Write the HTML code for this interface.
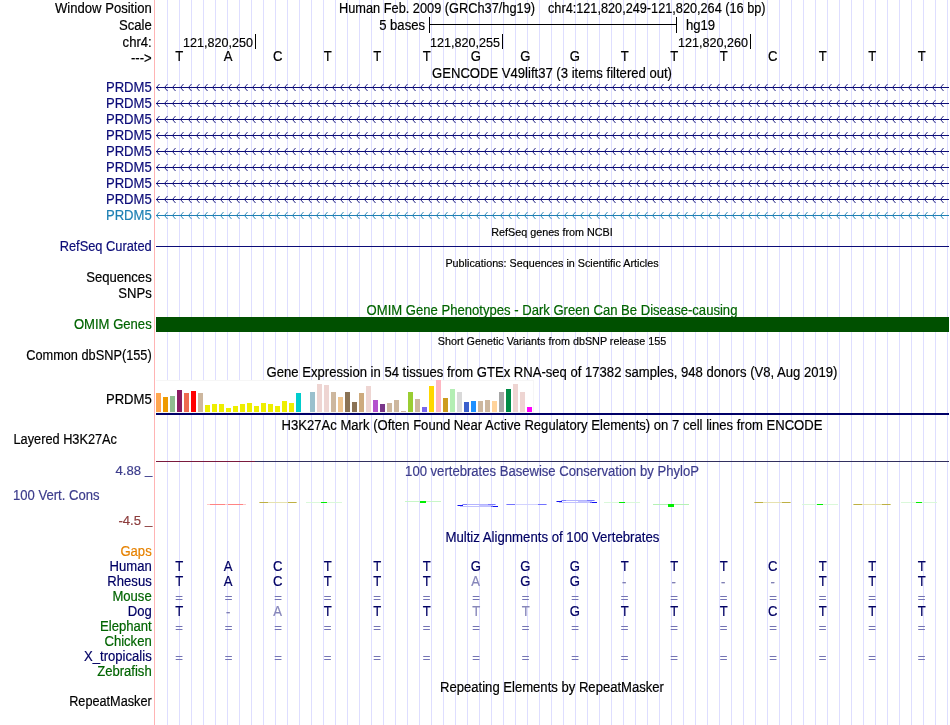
<!DOCTYPE html>
<html lang="en"><head><meta charset="utf-8"><title>UCSC Genome Browser - chr4:121,820,249-121,820,264</title>
<style>
html,body{margin:0;padding:0;background:#fff;}
svg{display:block;will-change:transform;font-family:"Liberation Sans", "DejaVu Sans", sans-serif;}
rect{shape-rendering:crispEdges;}
text{stroke-width:0.18px;}
</style></head><body>
<svg width="950" height="725" viewBox="0 0 950 725">
<rect x="0" y="0" width="950" height="725" fill="#fff"/>
<path d="M167.5 0V725M179.5 0V725M191.5 0V725M203.5 0V725M215.5 0V725M227.5 0V725M239.5 0V725M251.5 0V725M263.5 0V725M275.5 0V725M287.5 0V725M299.5 0V725M311.5 0V725M323.5 0V725M335.5 0V725M347.5 0V725M359.5 0V725M371.5 0V725M383.5 0V725M395.5 0V725M407.5 0V725M419.5 0V725M431.5 0V725M443.5 0V725M455.5 0V725M467.5 0V725M479.5 0V725M491.5 0V725M503.5 0V725M515.5 0V725M527.5 0V725M539.5 0V725M551.5 0V725M563.5 0V725M575.5 0V725M587.5 0V725M599.5 0V725M611.5 0V725M623.5 0V725M635.5 0V725M647.5 0V725M659.5 0V725M671.5 0V725M683.5 0V725M695.5 0V725M707.5 0V725M719.5 0V725M731.5 0V725M743.5 0V725M755.5 0V725M767.5 0V725M779.5 0V725M791.5 0V725M803.5 0V725M815.5 0V725M827.5 0V725M839.5 0V725M851.5 0V725M863.5 0V725M875.5 0V725M887.5 0V725M899.5 0V725M911.5 0V725M923.5 0V725M935.5 0V725M947.5 0V725" stroke="#dedeff" stroke-width="1" fill="none"/>
<rect x="154" y="0" width="1" height="725" fill="#ffb4b4"/>
<text transform="matrix(1 0 0 1.07 151.7 13)" text-anchor="end" fill="#000" stroke="#000" font-size="13.1">Window Position</text>
<text transform="matrix(1 0 0 1.07 339 13)" text-anchor="start" fill="#000" stroke="#000" font-size="13.1" textLength="196" lengthAdjust="spacingAndGlyphs">Human Feb. 2009 (GRCh37/hg19)</text>
<text transform="matrix(1 0 0 1.07 548 13)" text-anchor="start" fill="#000" stroke="#000" font-size="13.1" textLength="217.5" lengthAdjust="spacingAndGlyphs">chr4:121,820,249-121,820,264 (16 bp)</text>
<text transform="matrix(1 0 0 1.07 151.7 30)" text-anchor="end" fill="#000" stroke="#000" font-size="13.1">Scale</text>
<text transform="matrix(1 0 0 1.07 425 30)" text-anchor="end" fill="#000" stroke="#000" font-size="13.1">5 bases</text>
<rect x="429" y="24" width="248" height="1" fill="#000"/>
<rect x="429" y="17" width="1" height="16" fill="#000"/>
<rect x="676" y="17" width="1" height="16" fill="#000"/>
<text transform="matrix(1 0 0 1.07 686 30)" text-anchor="start" fill="#000" stroke="#000" font-size="13.1">hg19</text>
<text transform="matrix(1 0 0 1.07 151.7 47)" text-anchor="end" fill="#000" stroke="#000" font-size="13.1">chr4:</text>
<rect x="255" y="34" width="1" height="15" fill="#000"/>
<text transform="matrix(1 0 0 1.0 253 47)" text-anchor="end" fill="#000" stroke="#000" font-size="13.1" textLength="70" lengthAdjust="spacingAndGlyphs">121,820,250</text>
<rect x="502" y="34" width="1" height="15" fill="#000"/>
<text transform="matrix(1 0 0 1.0 500 47)" text-anchor="end" fill="#000" stroke="#000" font-size="13.1" textLength="70" lengthAdjust="spacingAndGlyphs">121,820,255</text>
<rect x="750" y="34" width="1" height="15" fill="#000"/>
<text transform="matrix(1 0 0 1.0 748 47)" text-anchor="end" fill="#000" stroke="#000" font-size="13.1" textLength="70" lengthAdjust="spacingAndGlyphs">121,820,260</text>
<text transform="matrix(1 0 0 1.07 151.7 63)" text-anchor="end" fill="#000" stroke="#000" font-size="13.1">---&gt;</text>
<text transform="matrix(1 0 0 1.07 179.3 61)" text-anchor="middle" fill="#000" stroke="#000" font-size="13.1">T</text>
<text transform="matrix(1 0 0 1.07 228.0 61)" text-anchor="middle" fill="#000" stroke="#000" font-size="13.1">A</text>
<text transform="matrix(1 0 0 1.07 277.7 61)" text-anchor="middle" fill="#000" stroke="#000" font-size="13.1">C</text>
<text transform="matrix(1 0 0 1.07 327.8 61)" text-anchor="middle" fill="#000" stroke="#000" font-size="13.1">T</text>
<text transform="matrix(1 0 0 1.07 377.3 61)" text-anchor="middle" fill="#000" stroke="#000" font-size="13.1">T</text>
<text transform="matrix(1 0 0 1.07 426.8 61)" text-anchor="middle" fill="#000" stroke="#000" font-size="13.1">T</text>
<text transform="matrix(1 0 0 1.07 475.9 61)" text-anchor="middle" fill="#000" stroke="#000" font-size="13.1">G</text>
<text transform="matrix(1 0 0 1.07 525.4 61)" text-anchor="middle" fill="#000" stroke="#000" font-size="13.1">G</text>
<text transform="matrix(1 0 0 1.07 574.9 61)" text-anchor="middle" fill="#000" stroke="#000" font-size="13.1">G</text>
<text transform="matrix(1 0 0 1.07 624.8 61)" text-anchor="middle" fill="#000" stroke="#000" font-size="13.1">T</text>
<text transform="matrix(1 0 0 1.07 674.3 61)" text-anchor="middle" fill="#000" stroke="#000" font-size="13.1">T</text>
<text transform="matrix(1 0 0 1.07 723.8 61)" text-anchor="middle" fill="#000" stroke="#000" font-size="13.1">T</text>
<text transform="matrix(1 0 0 1.07 772.7 61)" text-anchor="middle" fill="#000" stroke="#000" font-size="13.1">C</text>
<text transform="matrix(1 0 0 1.07 822.8 61)" text-anchor="middle" fill="#000" stroke="#000" font-size="13.1">T</text>
<text transform="matrix(1 0 0 1.07 872.3 61)" text-anchor="middle" fill="#000" stroke="#000" font-size="13.1">T</text>
<text transform="matrix(1 0 0 1.07 921.8 61)" text-anchor="middle" fill="#000" stroke="#000" font-size="13.1">T</text>
<text transform="matrix(1 0 0 1.07 552 78)" text-anchor="middle" fill="#000" stroke="#000" font-size="13.1">GENCODE V49lift37 (3 items filtered out)</text>
<defs><path id="bb" d="M3.5 -3.5L0.5 0L3.5 3.5" fill="none" stroke-width="1"/></defs>
<text transform="matrix(1 0 0 1.07 151.7 92)" text-anchor="end" fill="#0c0c78" stroke="#0c0c78" font-size="13.1">PRDM5</text>
<rect x="156" y="87" width="793" height="1" fill="#0c0c78"/>
<path d="M159.5 84L156.5 87.5L159.5 91M167.5 84L164.5 87.5L167.5 91M175.5 84L172.5 87.5L175.5 91M183.5 84L180.5 87.5L183.5 91M191.5 84L188.5 87.5L191.5 91M199.5 84L196.5 87.5L199.5 91M207.5 84L204.5 87.5L207.5 91M215.5 84L212.5 87.5L215.5 91M223.5 84L220.5 87.5L223.5 91M231.5 84L228.5 87.5L231.5 91M239.5 84L236.5 87.5L239.5 91M247.5 84L244.5 87.5L247.5 91M255.5 84L252.5 87.5L255.5 91M263.5 84L260.5 87.5L263.5 91M271.5 84L268.5 87.5L271.5 91M279.5 84L276.5 87.5L279.5 91M287.5 84L284.5 87.5L287.5 91M295.5 84L292.5 87.5L295.5 91M303.5 84L300.5 87.5L303.5 91M311.5 84L308.5 87.5L311.5 91M319.5 84L316.5 87.5L319.5 91M327.5 84L324.5 87.5L327.5 91M335.5 84L332.5 87.5L335.5 91M343.5 84L340.5 87.5L343.5 91M351.5 84L348.5 87.5L351.5 91M359.5 84L356.5 87.5L359.5 91M367.5 84L364.5 87.5L367.5 91M375.5 84L372.5 87.5L375.5 91M383.5 84L380.5 87.5L383.5 91M391.5 84L388.5 87.5L391.5 91M399.5 84L396.5 87.5L399.5 91M407.5 84L404.5 87.5L407.5 91M415.5 84L412.5 87.5L415.5 91M423.5 84L420.5 87.5L423.5 91M431.5 84L428.5 87.5L431.5 91M439.5 84L436.5 87.5L439.5 91M447.5 84L444.5 87.5L447.5 91M455.5 84L452.5 87.5L455.5 91M463.5 84L460.5 87.5L463.5 91M471.5 84L468.5 87.5L471.5 91M479.5 84L476.5 87.5L479.5 91M487.5 84L484.5 87.5L487.5 91M495.5 84L492.5 87.5L495.5 91M503.5 84L500.5 87.5L503.5 91M511.5 84L508.5 87.5L511.5 91M519.5 84L516.5 87.5L519.5 91M527.5 84L524.5 87.5L527.5 91M535.5 84L532.5 87.5L535.5 91M543.5 84L540.5 87.5L543.5 91M551.5 84L548.5 87.5L551.5 91M559.5 84L556.5 87.5L559.5 91M567.5 84L564.5 87.5L567.5 91M575.5 84L572.5 87.5L575.5 91M583.5 84L580.5 87.5L583.5 91M591.5 84L588.5 87.5L591.5 91M599.5 84L596.5 87.5L599.5 91M607.5 84L604.5 87.5L607.5 91M615.5 84L612.5 87.5L615.5 91M623.5 84L620.5 87.5L623.5 91M631.5 84L628.5 87.5L631.5 91M639.5 84L636.5 87.5L639.5 91M647.5 84L644.5 87.5L647.5 91M655.5 84L652.5 87.5L655.5 91M663.5 84L660.5 87.5L663.5 91M671.5 84L668.5 87.5L671.5 91M679.5 84L676.5 87.5L679.5 91M687.5 84L684.5 87.5L687.5 91M695.5 84L692.5 87.5L695.5 91M703.5 84L700.5 87.5L703.5 91M711.5 84L708.5 87.5L711.5 91M719.5 84L716.5 87.5L719.5 91M727.5 84L724.5 87.5L727.5 91M735.5 84L732.5 87.5L735.5 91M743.5 84L740.5 87.5L743.5 91M751.5 84L748.5 87.5L751.5 91M759.5 84L756.5 87.5L759.5 91M767.5 84L764.5 87.5L767.5 91M775.5 84L772.5 87.5L775.5 91M783.5 84L780.5 87.5L783.5 91M791.5 84L788.5 87.5L791.5 91M799.5 84L796.5 87.5L799.5 91M807.5 84L804.5 87.5L807.5 91M815.5 84L812.5 87.5L815.5 91M823.5 84L820.5 87.5L823.5 91M831.5 84L828.5 87.5L831.5 91M839.5 84L836.5 87.5L839.5 91M847.5 84L844.5 87.5L847.5 91M855.5 84L852.5 87.5L855.5 91M863.5 84L860.5 87.5L863.5 91M871.5 84L868.5 87.5L871.5 91M879.5 84L876.5 87.5L879.5 91M887.5 84L884.5 87.5L887.5 91M895.5 84L892.5 87.5L895.5 91M903.5 84L900.5 87.5L903.5 91M911.5 84L908.5 87.5L911.5 91M919.5 84L916.5 87.5L919.5 91M927.5 84L924.5 87.5L927.5 91M935.5 84L932.5 87.5L935.5 91M943.5 84L940.5 87.5L943.5 91" stroke="#0c0c78" stroke-width="0.9" fill="none"/>
<text transform="matrix(1 0 0 1.07 151.7 108)" text-anchor="end" fill="#0c0c78" stroke="#0c0c78" font-size="13.1">PRDM5</text>
<rect x="156" y="103" width="793" height="1" fill="#0c0c78"/>
<path d="M159.5 100L156.5 103.5L159.5 107M167.5 100L164.5 103.5L167.5 107M175.5 100L172.5 103.5L175.5 107M183.5 100L180.5 103.5L183.5 107M191.5 100L188.5 103.5L191.5 107M199.5 100L196.5 103.5L199.5 107M207.5 100L204.5 103.5L207.5 107M215.5 100L212.5 103.5L215.5 107M223.5 100L220.5 103.5L223.5 107M231.5 100L228.5 103.5L231.5 107M239.5 100L236.5 103.5L239.5 107M247.5 100L244.5 103.5L247.5 107M255.5 100L252.5 103.5L255.5 107M263.5 100L260.5 103.5L263.5 107M271.5 100L268.5 103.5L271.5 107M279.5 100L276.5 103.5L279.5 107M287.5 100L284.5 103.5L287.5 107M295.5 100L292.5 103.5L295.5 107M303.5 100L300.5 103.5L303.5 107M311.5 100L308.5 103.5L311.5 107M319.5 100L316.5 103.5L319.5 107M327.5 100L324.5 103.5L327.5 107M335.5 100L332.5 103.5L335.5 107M343.5 100L340.5 103.5L343.5 107M351.5 100L348.5 103.5L351.5 107M359.5 100L356.5 103.5L359.5 107M367.5 100L364.5 103.5L367.5 107M375.5 100L372.5 103.5L375.5 107M383.5 100L380.5 103.5L383.5 107M391.5 100L388.5 103.5L391.5 107M399.5 100L396.5 103.5L399.5 107M407.5 100L404.5 103.5L407.5 107M415.5 100L412.5 103.5L415.5 107M423.5 100L420.5 103.5L423.5 107M431.5 100L428.5 103.5L431.5 107M439.5 100L436.5 103.5L439.5 107M447.5 100L444.5 103.5L447.5 107M455.5 100L452.5 103.5L455.5 107M463.5 100L460.5 103.5L463.5 107M471.5 100L468.5 103.5L471.5 107M479.5 100L476.5 103.5L479.5 107M487.5 100L484.5 103.5L487.5 107M495.5 100L492.5 103.5L495.5 107M503.5 100L500.5 103.5L503.5 107M511.5 100L508.5 103.5L511.5 107M519.5 100L516.5 103.5L519.5 107M527.5 100L524.5 103.5L527.5 107M535.5 100L532.5 103.5L535.5 107M543.5 100L540.5 103.5L543.5 107M551.5 100L548.5 103.5L551.5 107M559.5 100L556.5 103.5L559.5 107M567.5 100L564.5 103.5L567.5 107M575.5 100L572.5 103.5L575.5 107M583.5 100L580.5 103.5L583.5 107M591.5 100L588.5 103.5L591.5 107M599.5 100L596.5 103.5L599.5 107M607.5 100L604.5 103.5L607.5 107M615.5 100L612.5 103.5L615.5 107M623.5 100L620.5 103.5L623.5 107M631.5 100L628.5 103.5L631.5 107M639.5 100L636.5 103.5L639.5 107M647.5 100L644.5 103.5L647.5 107M655.5 100L652.5 103.5L655.5 107M663.5 100L660.5 103.5L663.5 107M671.5 100L668.5 103.5L671.5 107M679.5 100L676.5 103.5L679.5 107M687.5 100L684.5 103.5L687.5 107M695.5 100L692.5 103.5L695.5 107M703.5 100L700.5 103.5L703.5 107M711.5 100L708.5 103.5L711.5 107M719.5 100L716.5 103.5L719.5 107M727.5 100L724.5 103.5L727.5 107M735.5 100L732.5 103.5L735.5 107M743.5 100L740.5 103.5L743.5 107M751.5 100L748.5 103.5L751.5 107M759.5 100L756.5 103.5L759.5 107M767.5 100L764.5 103.5L767.5 107M775.5 100L772.5 103.5L775.5 107M783.5 100L780.5 103.5L783.5 107M791.5 100L788.5 103.5L791.5 107M799.5 100L796.5 103.5L799.5 107M807.5 100L804.5 103.5L807.5 107M815.5 100L812.5 103.5L815.5 107M823.5 100L820.5 103.5L823.5 107M831.5 100L828.5 103.5L831.5 107M839.5 100L836.5 103.5L839.5 107M847.5 100L844.5 103.5L847.5 107M855.5 100L852.5 103.5L855.5 107M863.5 100L860.5 103.5L863.5 107M871.5 100L868.5 103.5L871.5 107M879.5 100L876.5 103.5L879.5 107M887.5 100L884.5 103.5L887.5 107M895.5 100L892.5 103.5L895.5 107M903.5 100L900.5 103.5L903.5 107M911.5 100L908.5 103.5L911.5 107M919.5 100L916.5 103.5L919.5 107M927.5 100L924.5 103.5L927.5 107M935.5 100L932.5 103.5L935.5 107M943.5 100L940.5 103.5L943.5 107" stroke="#0c0c78" stroke-width="0.9" fill="none"/>
<text transform="matrix(1 0 0 1.07 151.7 124)" text-anchor="end" fill="#0c0c78" stroke="#0c0c78" font-size="13.1">PRDM5</text>
<rect x="156" y="119" width="793" height="1" fill="#0c0c78"/>
<path d="M159.5 116L156.5 119.5L159.5 123M167.5 116L164.5 119.5L167.5 123M175.5 116L172.5 119.5L175.5 123M183.5 116L180.5 119.5L183.5 123M191.5 116L188.5 119.5L191.5 123M199.5 116L196.5 119.5L199.5 123M207.5 116L204.5 119.5L207.5 123M215.5 116L212.5 119.5L215.5 123M223.5 116L220.5 119.5L223.5 123M231.5 116L228.5 119.5L231.5 123M239.5 116L236.5 119.5L239.5 123M247.5 116L244.5 119.5L247.5 123M255.5 116L252.5 119.5L255.5 123M263.5 116L260.5 119.5L263.5 123M271.5 116L268.5 119.5L271.5 123M279.5 116L276.5 119.5L279.5 123M287.5 116L284.5 119.5L287.5 123M295.5 116L292.5 119.5L295.5 123M303.5 116L300.5 119.5L303.5 123M311.5 116L308.5 119.5L311.5 123M319.5 116L316.5 119.5L319.5 123M327.5 116L324.5 119.5L327.5 123M335.5 116L332.5 119.5L335.5 123M343.5 116L340.5 119.5L343.5 123M351.5 116L348.5 119.5L351.5 123M359.5 116L356.5 119.5L359.5 123M367.5 116L364.5 119.5L367.5 123M375.5 116L372.5 119.5L375.5 123M383.5 116L380.5 119.5L383.5 123M391.5 116L388.5 119.5L391.5 123M399.5 116L396.5 119.5L399.5 123M407.5 116L404.5 119.5L407.5 123M415.5 116L412.5 119.5L415.5 123M423.5 116L420.5 119.5L423.5 123M431.5 116L428.5 119.5L431.5 123M439.5 116L436.5 119.5L439.5 123M447.5 116L444.5 119.5L447.5 123M455.5 116L452.5 119.5L455.5 123M463.5 116L460.5 119.5L463.5 123M471.5 116L468.5 119.5L471.5 123M479.5 116L476.5 119.5L479.5 123M487.5 116L484.5 119.5L487.5 123M495.5 116L492.5 119.5L495.5 123M503.5 116L500.5 119.5L503.5 123M511.5 116L508.5 119.5L511.5 123M519.5 116L516.5 119.5L519.5 123M527.5 116L524.5 119.5L527.5 123M535.5 116L532.5 119.5L535.5 123M543.5 116L540.5 119.5L543.5 123M551.5 116L548.5 119.5L551.5 123M559.5 116L556.5 119.5L559.5 123M567.5 116L564.5 119.5L567.5 123M575.5 116L572.5 119.5L575.5 123M583.5 116L580.5 119.5L583.5 123M591.5 116L588.5 119.5L591.5 123M599.5 116L596.5 119.5L599.5 123M607.5 116L604.5 119.5L607.5 123M615.5 116L612.5 119.5L615.5 123M623.5 116L620.5 119.5L623.5 123M631.5 116L628.5 119.5L631.5 123M639.5 116L636.5 119.5L639.5 123M647.5 116L644.5 119.5L647.5 123M655.5 116L652.5 119.5L655.5 123M663.5 116L660.5 119.5L663.5 123M671.5 116L668.5 119.5L671.5 123M679.5 116L676.5 119.5L679.5 123M687.5 116L684.5 119.5L687.5 123M695.5 116L692.5 119.5L695.5 123M703.5 116L700.5 119.5L703.5 123M711.5 116L708.5 119.5L711.5 123M719.5 116L716.5 119.5L719.5 123M727.5 116L724.5 119.5L727.5 123M735.5 116L732.5 119.5L735.5 123M743.5 116L740.5 119.5L743.5 123M751.5 116L748.5 119.5L751.5 123M759.5 116L756.5 119.5L759.5 123M767.5 116L764.5 119.5L767.5 123M775.5 116L772.5 119.5L775.5 123M783.5 116L780.5 119.5L783.5 123M791.5 116L788.5 119.5L791.5 123M799.5 116L796.5 119.5L799.5 123M807.5 116L804.5 119.5L807.5 123M815.5 116L812.5 119.5L815.5 123M823.5 116L820.5 119.5L823.5 123M831.5 116L828.5 119.5L831.5 123M839.5 116L836.5 119.5L839.5 123M847.5 116L844.5 119.5L847.5 123M855.5 116L852.5 119.5L855.5 123M863.5 116L860.5 119.5L863.5 123M871.5 116L868.5 119.5L871.5 123M879.5 116L876.5 119.5L879.5 123M887.5 116L884.5 119.5L887.5 123M895.5 116L892.5 119.5L895.5 123M903.5 116L900.5 119.5L903.5 123M911.5 116L908.5 119.5L911.5 123M919.5 116L916.5 119.5L919.5 123M927.5 116L924.5 119.5L927.5 123M935.5 116L932.5 119.5L935.5 123M943.5 116L940.5 119.5L943.5 123" stroke="#0c0c78" stroke-width="0.9" fill="none"/>
<text transform="matrix(1 0 0 1.07 151.7 140)" text-anchor="end" fill="#0c0c78" stroke="#0c0c78" font-size="13.1">PRDM5</text>
<rect x="156" y="135" width="793" height="1" fill="#0c0c78"/>
<path d="M159.5 132L156.5 135.5L159.5 139M167.5 132L164.5 135.5L167.5 139M175.5 132L172.5 135.5L175.5 139M183.5 132L180.5 135.5L183.5 139M191.5 132L188.5 135.5L191.5 139M199.5 132L196.5 135.5L199.5 139M207.5 132L204.5 135.5L207.5 139M215.5 132L212.5 135.5L215.5 139M223.5 132L220.5 135.5L223.5 139M231.5 132L228.5 135.5L231.5 139M239.5 132L236.5 135.5L239.5 139M247.5 132L244.5 135.5L247.5 139M255.5 132L252.5 135.5L255.5 139M263.5 132L260.5 135.5L263.5 139M271.5 132L268.5 135.5L271.5 139M279.5 132L276.5 135.5L279.5 139M287.5 132L284.5 135.5L287.5 139M295.5 132L292.5 135.5L295.5 139M303.5 132L300.5 135.5L303.5 139M311.5 132L308.5 135.5L311.5 139M319.5 132L316.5 135.5L319.5 139M327.5 132L324.5 135.5L327.5 139M335.5 132L332.5 135.5L335.5 139M343.5 132L340.5 135.5L343.5 139M351.5 132L348.5 135.5L351.5 139M359.5 132L356.5 135.5L359.5 139M367.5 132L364.5 135.5L367.5 139M375.5 132L372.5 135.5L375.5 139M383.5 132L380.5 135.5L383.5 139M391.5 132L388.5 135.5L391.5 139M399.5 132L396.5 135.5L399.5 139M407.5 132L404.5 135.5L407.5 139M415.5 132L412.5 135.5L415.5 139M423.5 132L420.5 135.5L423.5 139M431.5 132L428.5 135.5L431.5 139M439.5 132L436.5 135.5L439.5 139M447.5 132L444.5 135.5L447.5 139M455.5 132L452.5 135.5L455.5 139M463.5 132L460.5 135.5L463.5 139M471.5 132L468.5 135.5L471.5 139M479.5 132L476.5 135.5L479.5 139M487.5 132L484.5 135.5L487.5 139M495.5 132L492.5 135.5L495.5 139M503.5 132L500.5 135.5L503.5 139M511.5 132L508.5 135.5L511.5 139M519.5 132L516.5 135.5L519.5 139M527.5 132L524.5 135.5L527.5 139M535.5 132L532.5 135.5L535.5 139M543.5 132L540.5 135.5L543.5 139M551.5 132L548.5 135.5L551.5 139M559.5 132L556.5 135.5L559.5 139M567.5 132L564.5 135.5L567.5 139M575.5 132L572.5 135.5L575.5 139M583.5 132L580.5 135.5L583.5 139M591.5 132L588.5 135.5L591.5 139M599.5 132L596.5 135.5L599.5 139M607.5 132L604.5 135.5L607.5 139M615.5 132L612.5 135.5L615.5 139M623.5 132L620.5 135.5L623.5 139M631.5 132L628.5 135.5L631.5 139M639.5 132L636.5 135.5L639.5 139M647.5 132L644.5 135.5L647.5 139M655.5 132L652.5 135.5L655.5 139M663.5 132L660.5 135.5L663.5 139M671.5 132L668.5 135.5L671.5 139M679.5 132L676.5 135.5L679.5 139M687.5 132L684.5 135.5L687.5 139M695.5 132L692.5 135.5L695.5 139M703.5 132L700.5 135.5L703.5 139M711.5 132L708.5 135.5L711.5 139M719.5 132L716.5 135.5L719.5 139M727.5 132L724.5 135.5L727.5 139M735.5 132L732.5 135.5L735.5 139M743.5 132L740.5 135.5L743.5 139M751.5 132L748.5 135.5L751.5 139M759.5 132L756.5 135.5L759.5 139M767.5 132L764.5 135.5L767.5 139M775.5 132L772.5 135.5L775.5 139M783.5 132L780.5 135.5L783.5 139M791.5 132L788.5 135.5L791.5 139M799.5 132L796.5 135.5L799.5 139M807.5 132L804.5 135.5L807.5 139M815.5 132L812.5 135.5L815.5 139M823.5 132L820.5 135.5L823.5 139M831.5 132L828.5 135.5L831.5 139M839.5 132L836.5 135.5L839.5 139M847.5 132L844.5 135.5L847.5 139M855.5 132L852.5 135.5L855.5 139M863.5 132L860.5 135.5L863.5 139M871.5 132L868.5 135.5L871.5 139M879.5 132L876.5 135.5L879.5 139M887.5 132L884.5 135.5L887.5 139M895.5 132L892.5 135.5L895.5 139M903.5 132L900.5 135.5L903.5 139M911.5 132L908.5 135.5L911.5 139M919.5 132L916.5 135.5L919.5 139M927.5 132L924.5 135.5L927.5 139M935.5 132L932.5 135.5L935.5 139M943.5 132L940.5 135.5L943.5 139" stroke="#0c0c78" stroke-width="0.9" fill="none"/>
<text transform="matrix(1 0 0 1.07 151.7 156)" text-anchor="end" fill="#0c0c78" stroke="#0c0c78" font-size="13.1">PRDM5</text>
<rect x="156" y="151" width="793" height="1" fill="#0c0c78"/>
<path d="M159.5 148L156.5 151.5L159.5 155M167.5 148L164.5 151.5L167.5 155M175.5 148L172.5 151.5L175.5 155M183.5 148L180.5 151.5L183.5 155M191.5 148L188.5 151.5L191.5 155M199.5 148L196.5 151.5L199.5 155M207.5 148L204.5 151.5L207.5 155M215.5 148L212.5 151.5L215.5 155M223.5 148L220.5 151.5L223.5 155M231.5 148L228.5 151.5L231.5 155M239.5 148L236.5 151.5L239.5 155M247.5 148L244.5 151.5L247.5 155M255.5 148L252.5 151.5L255.5 155M263.5 148L260.5 151.5L263.5 155M271.5 148L268.5 151.5L271.5 155M279.5 148L276.5 151.5L279.5 155M287.5 148L284.5 151.5L287.5 155M295.5 148L292.5 151.5L295.5 155M303.5 148L300.5 151.5L303.5 155M311.5 148L308.5 151.5L311.5 155M319.5 148L316.5 151.5L319.5 155M327.5 148L324.5 151.5L327.5 155M335.5 148L332.5 151.5L335.5 155M343.5 148L340.5 151.5L343.5 155M351.5 148L348.5 151.5L351.5 155M359.5 148L356.5 151.5L359.5 155M367.5 148L364.5 151.5L367.5 155M375.5 148L372.5 151.5L375.5 155M383.5 148L380.5 151.5L383.5 155M391.5 148L388.5 151.5L391.5 155M399.5 148L396.5 151.5L399.5 155M407.5 148L404.5 151.5L407.5 155M415.5 148L412.5 151.5L415.5 155M423.5 148L420.5 151.5L423.5 155M431.5 148L428.5 151.5L431.5 155M439.5 148L436.5 151.5L439.5 155M447.5 148L444.5 151.5L447.5 155M455.5 148L452.5 151.5L455.5 155M463.5 148L460.5 151.5L463.5 155M471.5 148L468.5 151.5L471.5 155M479.5 148L476.5 151.5L479.5 155M487.5 148L484.5 151.5L487.5 155M495.5 148L492.5 151.5L495.5 155M503.5 148L500.5 151.5L503.5 155M511.5 148L508.5 151.5L511.5 155M519.5 148L516.5 151.5L519.5 155M527.5 148L524.5 151.5L527.5 155M535.5 148L532.5 151.5L535.5 155M543.5 148L540.5 151.5L543.5 155M551.5 148L548.5 151.5L551.5 155M559.5 148L556.5 151.5L559.5 155M567.5 148L564.5 151.5L567.5 155M575.5 148L572.5 151.5L575.5 155M583.5 148L580.5 151.5L583.5 155M591.5 148L588.5 151.5L591.5 155M599.5 148L596.5 151.5L599.5 155M607.5 148L604.5 151.5L607.5 155M615.5 148L612.5 151.5L615.5 155M623.5 148L620.5 151.5L623.5 155M631.5 148L628.5 151.5L631.5 155M639.5 148L636.5 151.5L639.5 155M647.5 148L644.5 151.5L647.5 155M655.5 148L652.5 151.5L655.5 155M663.5 148L660.5 151.5L663.5 155M671.5 148L668.5 151.5L671.5 155M679.5 148L676.5 151.5L679.5 155M687.5 148L684.5 151.5L687.5 155M695.5 148L692.5 151.5L695.5 155M703.5 148L700.5 151.5L703.5 155M711.5 148L708.5 151.5L711.5 155M719.5 148L716.5 151.5L719.5 155M727.5 148L724.5 151.5L727.5 155M735.5 148L732.5 151.5L735.5 155M743.5 148L740.5 151.5L743.5 155M751.5 148L748.5 151.5L751.5 155M759.5 148L756.5 151.5L759.5 155M767.5 148L764.5 151.5L767.5 155M775.5 148L772.5 151.5L775.5 155M783.5 148L780.5 151.5L783.5 155M791.5 148L788.5 151.5L791.5 155M799.5 148L796.5 151.5L799.5 155M807.5 148L804.5 151.5L807.5 155M815.5 148L812.5 151.5L815.5 155M823.5 148L820.5 151.5L823.5 155M831.5 148L828.5 151.5L831.5 155M839.5 148L836.5 151.5L839.5 155M847.5 148L844.5 151.5L847.5 155M855.5 148L852.5 151.5L855.5 155M863.5 148L860.5 151.5L863.5 155M871.5 148L868.5 151.5L871.5 155M879.5 148L876.5 151.5L879.5 155M887.5 148L884.5 151.5L887.5 155M895.5 148L892.5 151.5L895.5 155M903.5 148L900.5 151.5L903.5 155M911.5 148L908.5 151.5L911.5 155M919.5 148L916.5 151.5L919.5 155M927.5 148L924.5 151.5L927.5 155M935.5 148L932.5 151.5L935.5 155M943.5 148L940.5 151.5L943.5 155" stroke="#0c0c78" stroke-width="0.9" fill="none"/>
<text transform="matrix(1 0 0 1.07 151.7 172)" text-anchor="end" fill="#0c0c78" stroke="#0c0c78" font-size="13.1">PRDM5</text>
<rect x="156" y="167" width="793" height="1" fill="#0c0c78"/>
<path d="M159.5 164L156.5 167.5L159.5 171M167.5 164L164.5 167.5L167.5 171M175.5 164L172.5 167.5L175.5 171M183.5 164L180.5 167.5L183.5 171M191.5 164L188.5 167.5L191.5 171M199.5 164L196.5 167.5L199.5 171M207.5 164L204.5 167.5L207.5 171M215.5 164L212.5 167.5L215.5 171M223.5 164L220.5 167.5L223.5 171M231.5 164L228.5 167.5L231.5 171M239.5 164L236.5 167.5L239.5 171M247.5 164L244.5 167.5L247.5 171M255.5 164L252.5 167.5L255.5 171M263.5 164L260.5 167.5L263.5 171M271.5 164L268.5 167.5L271.5 171M279.5 164L276.5 167.5L279.5 171M287.5 164L284.5 167.5L287.5 171M295.5 164L292.5 167.5L295.5 171M303.5 164L300.5 167.5L303.5 171M311.5 164L308.5 167.5L311.5 171M319.5 164L316.5 167.5L319.5 171M327.5 164L324.5 167.5L327.5 171M335.5 164L332.5 167.5L335.5 171M343.5 164L340.5 167.5L343.5 171M351.5 164L348.5 167.5L351.5 171M359.5 164L356.5 167.5L359.5 171M367.5 164L364.5 167.5L367.5 171M375.5 164L372.5 167.5L375.5 171M383.5 164L380.5 167.5L383.5 171M391.5 164L388.5 167.5L391.5 171M399.5 164L396.5 167.5L399.5 171M407.5 164L404.5 167.5L407.5 171M415.5 164L412.5 167.5L415.5 171M423.5 164L420.5 167.5L423.5 171M431.5 164L428.5 167.5L431.5 171M439.5 164L436.5 167.5L439.5 171M447.5 164L444.5 167.5L447.5 171M455.5 164L452.5 167.5L455.5 171M463.5 164L460.5 167.5L463.5 171M471.5 164L468.5 167.5L471.5 171M479.5 164L476.5 167.5L479.5 171M487.5 164L484.5 167.5L487.5 171M495.5 164L492.5 167.5L495.5 171M503.5 164L500.5 167.5L503.5 171M511.5 164L508.5 167.5L511.5 171M519.5 164L516.5 167.5L519.5 171M527.5 164L524.5 167.5L527.5 171M535.5 164L532.5 167.5L535.5 171M543.5 164L540.5 167.5L543.5 171M551.5 164L548.5 167.5L551.5 171M559.5 164L556.5 167.5L559.5 171M567.5 164L564.5 167.5L567.5 171M575.5 164L572.5 167.5L575.5 171M583.5 164L580.5 167.5L583.5 171M591.5 164L588.5 167.5L591.5 171M599.5 164L596.5 167.5L599.5 171M607.5 164L604.5 167.5L607.5 171M615.5 164L612.5 167.5L615.5 171M623.5 164L620.5 167.5L623.5 171M631.5 164L628.5 167.5L631.5 171M639.5 164L636.5 167.5L639.5 171M647.5 164L644.5 167.5L647.5 171M655.5 164L652.5 167.5L655.5 171M663.5 164L660.5 167.5L663.5 171M671.5 164L668.5 167.5L671.5 171M679.5 164L676.5 167.5L679.5 171M687.5 164L684.5 167.5L687.5 171M695.5 164L692.5 167.5L695.5 171M703.5 164L700.5 167.5L703.5 171M711.5 164L708.5 167.5L711.5 171M719.5 164L716.5 167.5L719.5 171M727.5 164L724.5 167.5L727.5 171M735.5 164L732.5 167.5L735.5 171M743.5 164L740.5 167.5L743.5 171M751.5 164L748.5 167.5L751.5 171M759.5 164L756.5 167.5L759.5 171M767.5 164L764.5 167.5L767.5 171M775.5 164L772.5 167.5L775.5 171M783.5 164L780.5 167.5L783.5 171M791.5 164L788.5 167.5L791.5 171M799.5 164L796.5 167.5L799.5 171M807.5 164L804.5 167.5L807.5 171M815.5 164L812.5 167.5L815.5 171M823.5 164L820.5 167.5L823.5 171M831.5 164L828.5 167.5L831.5 171M839.5 164L836.5 167.5L839.5 171M847.5 164L844.5 167.5L847.5 171M855.5 164L852.5 167.5L855.5 171M863.5 164L860.5 167.5L863.5 171M871.5 164L868.5 167.5L871.5 171M879.5 164L876.5 167.5L879.5 171M887.5 164L884.5 167.5L887.5 171M895.5 164L892.5 167.5L895.5 171M903.5 164L900.5 167.5L903.5 171M911.5 164L908.5 167.5L911.5 171M919.5 164L916.5 167.5L919.5 171M927.5 164L924.5 167.5L927.5 171M935.5 164L932.5 167.5L935.5 171M943.5 164L940.5 167.5L943.5 171" stroke="#0c0c78" stroke-width="0.9" fill="none"/>
<text transform="matrix(1 0 0 1.07 151.7 188)" text-anchor="end" fill="#0c0c78" stroke="#0c0c78" font-size="13.1">PRDM5</text>
<rect x="156" y="183" width="793" height="1" fill="#0c0c78"/>
<path d="M159.5 180L156.5 183.5L159.5 187M167.5 180L164.5 183.5L167.5 187M175.5 180L172.5 183.5L175.5 187M183.5 180L180.5 183.5L183.5 187M191.5 180L188.5 183.5L191.5 187M199.5 180L196.5 183.5L199.5 187M207.5 180L204.5 183.5L207.5 187M215.5 180L212.5 183.5L215.5 187M223.5 180L220.5 183.5L223.5 187M231.5 180L228.5 183.5L231.5 187M239.5 180L236.5 183.5L239.5 187M247.5 180L244.5 183.5L247.5 187M255.5 180L252.5 183.5L255.5 187M263.5 180L260.5 183.5L263.5 187M271.5 180L268.5 183.5L271.5 187M279.5 180L276.5 183.5L279.5 187M287.5 180L284.5 183.5L287.5 187M295.5 180L292.5 183.5L295.5 187M303.5 180L300.5 183.5L303.5 187M311.5 180L308.5 183.5L311.5 187M319.5 180L316.5 183.5L319.5 187M327.5 180L324.5 183.5L327.5 187M335.5 180L332.5 183.5L335.5 187M343.5 180L340.5 183.5L343.5 187M351.5 180L348.5 183.5L351.5 187M359.5 180L356.5 183.5L359.5 187M367.5 180L364.5 183.5L367.5 187M375.5 180L372.5 183.5L375.5 187M383.5 180L380.5 183.5L383.5 187M391.5 180L388.5 183.5L391.5 187M399.5 180L396.5 183.5L399.5 187M407.5 180L404.5 183.5L407.5 187M415.5 180L412.5 183.5L415.5 187M423.5 180L420.5 183.5L423.5 187M431.5 180L428.5 183.5L431.5 187M439.5 180L436.5 183.5L439.5 187M447.5 180L444.5 183.5L447.5 187M455.5 180L452.5 183.5L455.5 187M463.5 180L460.5 183.5L463.5 187M471.5 180L468.5 183.5L471.5 187M479.5 180L476.5 183.5L479.5 187M487.5 180L484.5 183.5L487.5 187M495.5 180L492.5 183.5L495.5 187M503.5 180L500.5 183.5L503.5 187M511.5 180L508.5 183.5L511.5 187M519.5 180L516.5 183.5L519.5 187M527.5 180L524.5 183.5L527.5 187M535.5 180L532.5 183.5L535.5 187M543.5 180L540.5 183.5L543.5 187M551.5 180L548.5 183.5L551.5 187M559.5 180L556.5 183.5L559.5 187M567.5 180L564.5 183.5L567.5 187M575.5 180L572.5 183.5L575.5 187M583.5 180L580.5 183.5L583.5 187M591.5 180L588.5 183.5L591.5 187M599.5 180L596.5 183.5L599.5 187M607.5 180L604.5 183.5L607.5 187M615.5 180L612.5 183.5L615.5 187M623.5 180L620.5 183.5L623.5 187M631.5 180L628.5 183.5L631.5 187M639.5 180L636.5 183.5L639.5 187M647.5 180L644.5 183.5L647.5 187M655.5 180L652.5 183.5L655.5 187M663.5 180L660.5 183.5L663.5 187M671.5 180L668.5 183.5L671.5 187M679.5 180L676.5 183.5L679.5 187M687.5 180L684.5 183.5L687.5 187M695.5 180L692.5 183.5L695.5 187M703.5 180L700.5 183.5L703.5 187M711.5 180L708.5 183.5L711.5 187M719.5 180L716.5 183.5L719.5 187M727.5 180L724.5 183.5L727.5 187M735.5 180L732.5 183.5L735.5 187M743.5 180L740.5 183.5L743.5 187M751.5 180L748.5 183.5L751.5 187M759.5 180L756.5 183.5L759.5 187M767.5 180L764.5 183.5L767.5 187M775.5 180L772.5 183.5L775.5 187M783.5 180L780.5 183.5L783.5 187M791.5 180L788.5 183.5L791.5 187M799.5 180L796.5 183.5L799.5 187M807.5 180L804.5 183.5L807.5 187M815.5 180L812.5 183.5L815.5 187M823.5 180L820.5 183.5L823.5 187M831.5 180L828.5 183.5L831.5 187M839.5 180L836.5 183.5L839.5 187M847.5 180L844.5 183.5L847.5 187M855.5 180L852.5 183.5L855.5 187M863.5 180L860.5 183.5L863.5 187M871.5 180L868.5 183.5L871.5 187M879.5 180L876.5 183.5L879.5 187M887.5 180L884.5 183.5L887.5 187M895.5 180L892.5 183.5L895.5 187M903.5 180L900.5 183.5L903.5 187M911.5 180L908.5 183.5L911.5 187M919.5 180L916.5 183.5L919.5 187M927.5 180L924.5 183.5L927.5 187M935.5 180L932.5 183.5L935.5 187M943.5 180L940.5 183.5L943.5 187" stroke="#0c0c78" stroke-width="0.9" fill="none"/>
<text transform="matrix(1 0 0 1.07 151.7 204)" text-anchor="end" fill="#0c0c78" stroke="#0c0c78" font-size="13.1">PRDM5</text>
<rect x="156" y="199" width="793" height="1" fill="#0c0c78"/>
<path d="M159.5 196L156.5 199.5L159.5 203M167.5 196L164.5 199.5L167.5 203M175.5 196L172.5 199.5L175.5 203M183.5 196L180.5 199.5L183.5 203M191.5 196L188.5 199.5L191.5 203M199.5 196L196.5 199.5L199.5 203M207.5 196L204.5 199.5L207.5 203M215.5 196L212.5 199.5L215.5 203M223.5 196L220.5 199.5L223.5 203M231.5 196L228.5 199.5L231.5 203M239.5 196L236.5 199.5L239.5 203M247.5 196L244.5 199.5L247.5 203M255.5 196L252.5 199.5L255.5 203M263.5 196L260.5 199.5L263.5 203M271.5 196L268.5 199.5L271.5 203M279.5 196L276.5 199.5L279.5 203M287.5 196L284.5 199.5L287.5 203M295.5 196L292.5 199.5L295.5 203M303.5 196L300.5 199.5L303.5 203M311.5 196L308.5 199.5L311.5 203M319.5 196L316.5 199.5L319.5 203M327.5 196L324.5 199.5L327.5 203M335.5 196L332.5 199.5L335.5 203M343.5 196L340.5 199.5L343.5 203M351.5 196L348.5 199.5L351.5 203M359.5 196L356.5 199.5L359.5 203M367.5 196L364.5 199.5L367.5 203M375.5 196L372.5 199.5L375.5 203M383.5 196L380.5 199.5L383.5 203M391.5 196L388.5 199.5L391.5 203M399.5 196L396.5 199.5L399.5 203M407.5 196L404.5 199.5L407.5 203M415.5 196L412.5 199.5L415.5 203M423.5 196L420.5 199.5L423.5 203M431.5 196L428.5 199.5L431.5 203M439.5 196L436.5 199.5L439.5 203M447.5 196L444.5 199.5L447.5 203M455.5 196L452.5 199.5L455.5 203M463.5 196L460.5 199.5L463.5 203M471.5 196L468.5 199.5L471.5 203M479.5 196L476.5 199.5L479.5 203M487.5 196L484.5 199.5L487.5 203M495.5 196L492.5 199.5L495.5 203M503.5 196L500.5 199.5L503.5 203M511.5 196L508.5 199.5L511.5 203M519.5 196L516.5 199.5L519.5 203M527.5 196L524.5 199.5L527.5 203M535.5 196L532.5 199.5L535.5 203M543.5 196L540.5 199.5L543.5 203M551.5 196L548.5 199.5L551.5 203M559.5 196L556.5 199.5L559.5 203M567.5 196L564.5 199.5L567.5 203M575.5 196L572.5 199.5L575.5 203M583.5 196L580.5 199.5L583.5 203M591.5 196L588.5 199.5L591.5 203M599.5 196L596.5 199.5L599.5 203M607.5 196L604.5 199.5L607.5 203M615.5 196L612.5 199.5L615.5 203M623.5 196L620.5 199.5L623.5 203M631.5 196L628.5 199.5L631.5 203M639.5 196L636.5 199.5L639.5 203M647.5 196L644.5 199.5L647.5 203M655.5 196L652.5 199.5L655.5 203M663.5 196L660.5 199.5L663.5 203M671.5 196L668.5 199.5L671.5 203M679.5 196L676.5 199.5L679.5 203M687.5 196L684.5 199.5L687.5 203M695.5 196L692.5 199.5L695.5 203M703.5 196L700.5 199.5L703.5 203M711.5 196L708.5 199.5L711.5 203M719.5 196L716.5 199.5L719.5 203M727.5 196L724.5 199.5L727.5 203M735.5 196L732.5 199.5L735.5 203M743.5 196L740.5 199.5L743.5 203M751.5 196L748.5 199.5L751.5 203M759.5 196L756.5 199.5L759.5 203M767.5 196L764.5 199.5L767.5 203M775.5 196L772.5 199.5L775.5 203M783.5 196L780.5 199.5L783.5 203M791.5 196L788.5 199.5L791.5 203M799.5 196L796.5 199.5L799.5 203M807.5 196L804.5 199.5L807.5 203M815.5 196L812.5 199.5L815.5 203M823.5 196L820.5 199.5L823.5 203M831.5 196L828.5 199.5L831.5 203M839.5 196L836.5 199.5L839.5 203M847.5 196L844.5 199.5L847.5 203M855.5 196L852.5 199.5L855.5 203M863.5 196L860.5 199.5L863.5 203M871.5 196L868.5 199.5L871.5 203M879.5 196L876.5 199.5L879.5 203M887.5 196L884.5 199.5L887.5 203M895.5 196L892.5 199.5L895.5 203M903.5 196L900.5 199.5L903.5 203M911.5 196L908.5 199.5L911.5 203M919.5 196L916.5 199.5L919.5 203M927.5 196L924.5 199.5L927.5 203M935.5 196L932.5 199.5L935.5 203M943.5 196L940.5 199.5L943.5 203" stroke="#0c0c78" stroke-width="0.9" fill="none"/>
<text transform="matrix(1 0 0 1.07 151.7 220)" text-anchor="end" fill="#1e80b4" stroke="#1e80b4" font-size="13.1">PRDM5</text>
<rect x="156" y="215" width="793" height="1" fill="#1e80b4"/>
<path d="M159.5 212L156.5 215.5L159.5 219M167.5 212L164.5 215.5L167.5 219M175.5 212L172.5 215.5L175.5 219M183.5 212L180.5 215.5L183.5 219M191.5 212L188.5 215.5L191.5 219M199.5 212L196.5 215.5L199.5 219M207.5 212L204.5 215.5L207.5 219M215.5 212L212.5 215.5L215.5 219M223.5 212L220.5 215.5L223.5 219M231.5 212L228.5 215.5L231.5 219M239.5 212L236.5 215.5L239.5 219M247.5 212L244.5 215.5L247.5 219M255.5 212L252.5 215.5L255.5 219M263.5 212L260.5 215.5L263.5 219M271.5 212L268.5 215.5L271.5 219M279.5 212L276.5 215.5L279.5 219M287.5 212L284.5 215.5L287.5 219M295.5 212L292.5 215.5L295.5 219M303.5 212L300.5 215.5L303.5 219M311.5 212L308.5 215.5L311.5 219M319.5 212L316.5 215.5L319.5 219M327.5 212L324.5 215.5L327.5 219M335.5 212L332.5 215.5L335.5 219M343.5 212L340.5 215.5L343.5 219M351.5 212L348.5 215.5L351.5 219M359.5 212L356.5 215.5L359.5 219M367.5 212L364.5 215.5L367.5 219M375.5 212L372.5 215.5L375.5 219M383.5 212L380.5 215.5L383.5 219M391.5 212L388.5 215.5L391.5 219M399.5 212L396.5 215.5L399.5 219M407.5 212L404.5 215.5L407.5 219M415.5 212L412.5 215.5L415.5 219M423.5 212L420.5 215.5L423.5 219M431.5 212L428.5 215.5L431.5 219M439.5 212L436.5 215.5L439.5 219M447.5 212L444.5 215.5L447.5 219M455.5 212L452.5 215.5L455.5 219M463.5 212L460.5 215.5L463.5 219M471.5 212L468.5 215.5L471.5 219M479.5 212L476.5 215.5L479.5 219M487.5 212L484.5 215.5L487.5 219M495.5 212L492.5 215.5L495.5 219M503.5 212L500.5 215.5L503.5 219M511.5 212L508.5 215.5L511.5 219M519.5 212L516.5 215.5L519.5 219M527.5 212L524.5 215.5L527.5 219M535.5 212L532.5 215.5L535.5 219M543.5 212L540.5 215.5L543.5 219M551.5 212L548.5 215.5L551.5 219M559.5 212L556.5 215.5L559.5 219M567.5 212L564.5 215.5L567.5 219M575.5 212L572.5 215.5L575.5 219M583.5 212L580.5 215.5L583.5 219M591.5 212L588.5 215.5L591.5 219M599.5 212L596.5 215.5L599.5 219M607.5 212L604.5 215.5L607.5 219M615.5 212L612.5 215.5L615.5 219M623.5 212L620.5 215.5L623.5 219M631.5 212L628.5 215.5L631.5 219M639.5 212L636.5 215.5L639.5 219M647.5 212L644.5 215.5L647.5 219M655.5 212L652.5 215.5L655.5 219M663.5 212L660.5 215.5L663.5 219M671.5 212L668.5 215.5L671.5 219M679.5 212L676.5 215.5L679.5 219M687.5 212L684.5 215.5L687.5 219M695.5 212L692.5 215.5L695.5 219M703.5 212L700.5 215.5L703.5 219M711.5 212L708.5 215.5L711.5 219M719.5 212L716.5 215.5L719.5 219M727.5 212L724.5 215.5L727.5 219M735.5 212L732.5 215.5L735.5 219M743.5 212L740.5 215.5L743.5 219M751.5 212L748.5 215.5L751.5 219M759.5 212L756.5 215.5L759.5 219M767.5 212L764.5 215.5L767.5 219M775.5 212L772.5 215.5L775.5 219M783.5 212L780.5 215.5L783.5 219M791.5 212L788.5 215.5L791.5 219M799.5 212L796.5 215.5L799.5 219M807.5 212L804.5 215.5L807.5 219M815.5 212L812.5 215.5L815.5 219M823.5 212L820.5 215.5L823.5 219M831.5 212L828.5 215.5L831.5 219M839.5 212L836.5 215.5L839.5 219M847.5 212L844.5 215.5L847.5 219M855.5 212L852.5 215.5L855.5 219M863.5 212L860.5 215.5L863.5 219M871.5 212L868.5 215.5L871.5 219M879.5 212L876.5 215.5L879.5 219M887.5 212L884.5 215.5L887.5 219M895.5 212L892.5 215.5L895.5 219M903.5 212L900.5 215.5L903.5 219M911.5 212L908.5 215.5L911.5 219M919.5 212L916.5 215.5L919.5 219M927.5 212L924.5 215.5L927.5 219M935.5 212L932.5 215.5L935.5 219M943.5 212L940.5 215.5L943.5 219" stroke="#1e80b4" stroke-width="0.9" fill="none"/>
<text transform="matrix(1 0 0 1.09 552 236)" text-anchor="middle" fill="#000" stroke="#000" font-size="10.79">RefSeq genes from NCBI</text>
<text transform="matrix(1 0 0 1.07 151.7 251)" text-anchor="end" fill="#0c0c78" stroke="#0c0c78" font-size="13.1" textLength="92" lengthAdjust="spacingAndGlyphs">RefSeq Curated</text>
<rect x="156" y="246" width="793" height="1" fill="#0c0c78"/>
<text transform="matrix(1 0 0 1.09 552 267)" text-anchor="middle" fill="#000" stroke="#000" font-size="10.79">Publications: Sequences in Scientific Articles</text>
<text transform="matrix(1 0 0 1.07 151.7 281.5)" text-anchor="end" fill="#000" stroke="#000" font-size="13.1">Sequences</text>
<text transform="matrix(1 0 0 1.07 151.7 297.5)" text-anchor="end" fill="#000" stroke="#000" font-size="13.1">SNPs</text>
<text transform="matrix(1 0 0 1.07 552 315)" text-anchor="middle" fill="#006400" stroke="#006400" font-size="13.1">OMIM Gene Phenotypes - Dark Green Can Be Disease-causing</text>
<text transform="matrix(1 0 0 1.07 151.7 329)" text-anchor="end" fill="#006400" stroke="#006400" font-size="13.1">OMIM Genes</text>
<rect x="156" y="317" width="793" height="15" fill="#005000"/>
<text transform="matrix(1 0 0 1.09 552 345)" text-anchor="middle" fill="#000" stroke="#000" font-size="10.79">Short Genetic Variants from dbSNP release 155</text>
<text transform="matrix(1 0 0 1.07 151.7 360)" text-anchor="end" fill="#000" stroke="#000" font-size="13.1" textLength="125.5" lengthAdjust="spacingAndGlyphs">Common dbSNP(155)</text>
<text transform="matrix(1 0 0 1.07 552 377)" text-anchor="middle" fill="#000" stroke="#000" font-size="13.1">Gene Expression in 54 tissues from GTEx RNA-seq of 17382 samples, 948 donors (V8, Aug 2019)</text>
<text transform="matrix(1 0 0 1.07 151.7 404)" text-anchor="end" fill="#000" stroke="#000" font-size="13.1">PRDM5</text>
<rect x="156" y="380" width="378" height="33" fill="#f6f6f6"/>
<rect x="156" y="381" width="377" height="31" fill="#fff"/>
<rect x="156" y="393" width="5" height="19" fill="#ffa54f"/>
<rect x="163" y="397" width="5" height="15" fill="#ee9a00"/>
<rect x="170" y="396" width="5" height="16" fill="#8fbc8f"/>
<rect x="177" y="390" width="5" height="22" fill="#8b1c62"/>
<rect x="184" y="393" width="5" height="19" fill="#ee6a50"/>
<rect x="191" y="391" width="5" height="21" fill="#ff0000"/>
<rect x="198" y="393" width="5" height="19" fill="#cdb79e"/>
<rect x="205" y="405" width="5" height="7" fill="#eeee00"/>
<rect x="212" y="404" width="5" height="8" fill="#eeee00"/>
<rect x="219" y="404" width="5" height="8" fill="#eeee00"/>
<rect x="226" y="408" width="5" height="4" fill="#eeee00"/>
<rect x="233" y="406" width="5" height="6" fill="#eeee00"/>
<rect x="240" y="404" width="5" height="8" fill="#eeee00"/>
<rect x="247" y="403" width="5" height="9" fill="#eeee00"/>
<rect x="254" y="406" width="5" height="6" fill="#eeee00"/>
<rect x="261" y="403" width="5" height="9" fill="#eeee00"/>
<rect x="268" y="404" width="5" height="8" fill="#eeee00"/>
<rect x="275" y="406" width="5" height="6" fill="#eeee00"/>
<rect x="282" y="401" width="5" height="11" fill="#eeee00"/>
<rect x="289" y="403" width="5" height="9" fill="#eeee00"/>
<rect x="296" y="393" width="5" height="19" fill="#00cdcd"/>
<rect x="310" y="392" width="5" height="20" fill="#9ac0cd"/>
<rect x="317" y="384" width="5" height="28" fill="#eed5d2"/>
<rect x="324" y="385" width="5" height="27" fill="#eed5d2"/>
<rect x="331" y="392" width="5" height="20" fill="#cdb79e"/>
<rect x="338" y="397" width="5" height="15" fill="#eec591"/>
<rect x="345" y="392" width="5" height="20" fill="#8b7355"/>
<rect x="352" y="402" width="5" height="10" fill="#8b7355"/>
<rect x="359" y="393" width="5" height="19" fill="#cdaa7d"/>
<rect x="366" y="386" width="5" height="26" fill="#eed5d2"/>
<rect x="373" y="400" width="5" height="12" fill="#b452cd"/>
<rect x="380" y="404" width="5" height="8" fill="#7a378b"/>
<rect x="387" y="403" width="5" height="9" fill="#cdb79e"/>
<rect x="394" y="400" width="5" height="12" fill="#cdb79e"/>
<rect x="401" y="411" width="5" height="1" fill="#cdb79e"/>
<rect x="408" y="392" width="5" height="20" fill="#9acd32"/>
<rect x="415" y="399" width="5" height="13" fill="#cdb79e"/>
<rect x="422" y="407" width="5" height="5" fill="#7a67ee"/>
<rect x="429" y="386" width="5" height="26" fill="#ffd700"/>
<rect x="436" y="380" width="5" height="32" fill="#ffb6c1"/>
<rect x="443" y="398" width="5" height="14" fill="#cd9b1d"/>
<rect x="450" y="389" width="5" height="23" fill="#b4eeb4"/>
<rect x="457" y="392" width="5" height="20" fill="#d9d9d9"/>
<rect x="464" y="402" width="5" height="10" fill="#3a5fcd"/>
<rect x="471" y="401" width="5" height="11" fill="#1e90ff"/>
<rect x="478" y="401" width="5" height="11" fill="#cdb79e"/>
<rect x="485" y="400" width="5" height="12" fill="#cdb79e"/>
<rect x="492" y="401" width="5" height="11" fill="#ffd39b"/>
<rect x="499" y="392" width="5" height="20" fill="#a6a6a6"/>
<rect x="506" y="389" width="5" height="23" fill="#008b45"/>
<rect x="513" y="384" width="5" height="28" fill="#eed5d2"/>
<rect x="520" y="392" width="5" height="20" fill="#eed5d2"/>
<rect x="527" y="407" width="5" height="5" fill="#ff00ff"/>
<rect x="156" y="413" width="793" height="2" fill="#000068"/>
<text transform="matrix(1 0 0 1.07 552 430)" text-anchor="middle" fill="#000" stroke="#000" font-size="13.1">H3K27Ac Mark (Often Found Near Active Regulatory Elements) on 7 cell lines from ENCODE</text>
<text transform="matrix(1 0 0 1.07 13.5 444)" text-anchor="start" fill="#000" stroke="#000" font-size="13.1" textLength="103.5" lengthAdjust="spacingAndGlyphs">Layered H3K27Ac</text>
<rect x="156" y="461" width="99" height="1" fill="#7a1a3c"/>
<rect x="255" y="461" width="694" height="1" fill="#32305e"/>
<text transform="matrix(1 0 0 1.0 141 474.5)" text-anchor="end" fill="#3c3c8c" stroke="#3c3c8c" font-size="13.1">4.88</text>
<text transform="matrix(1 0 0 1.0 152.2 473.8)" text-anchor="end" fill="#3c3c8c" stroke="#3c3c8c" font-size="13.1">_</text>
<text transform="matrix(1 0 0 1.07 552 476)" text-anchor="middle" fill="#3c3c8c" stroke="#3c3c8c" font-size="13.1">100 vertebrates Basewise Conservation by PhyloP</text>
<text transform="matrix(1 0 0 1.07 13 500)" text-anchor="start" fill="#3c3c8c" stroke="#3c3c8c" font-size="13.1">100 Vert. Cons</text>
<text transform="matrix(1 0 0 1.0 141 524.5)" text-anchor="end" fill="#8c3c3c" stroke="#8c3c3c" font-size="13.1">-4.5</text>
<text transform="matrix(1 0 0 1.0 152.2 523.8)" text-anchor="end" fill="#8c3c3c" stroke="#8c3c3c" font-size="13.1">_</text>
<rect x="207" y="504" width="39" height="1" fill="#ffc8c8" opacity="1.0"/>
<rect x="210" y="504" width="15" height="1" fill="#ff7878" opacity="0.85"/>
<rect x="228" y="504" width="15" height="1" fill="#ff7878" opacity="0.85"/>
<rect x="259" y="502" width="38" height="1" fill="#e6e2b0" opacity="1.0"/>
<rect x="260" y="502" width="8" height="1" fill="#b4a428" opacity="0.8"/>
<rect x="259" y="502" width="1" height="1" fill="#b4a428" opacity="0.3"/>
<rect x="288" y="502" width="8" height="1" fill="#b4a428" opacity="0.8"/>
<rect x="296" y="502" width="1" height="1" fill="#b4a428" opacity="0.3"/>
<rect x="754" y="502" width="37" height="1" fill="#e6e2b0" opacity="1.0"/>
<rect x="755" y="502" width="8" height="1" fill="#b4a428" opacity="0.8"/>
<rect x="754" y="502" width="1" height="1" fill="#b4a428" opacity="0.3"/>
<rect x="782" y="502" width="8" height="1" fill="#b4a428" opacity="0.8"/>
<rect x="790" y="502" width="1" height="1" fill="#b4a428" opacity="0.3"/>
<rect x="853" y="504" width="38" height="1" fill="#e6e2b0" opacity="1.0"/>
<rect x="854" y="504" width="8" height="1" fill="#b4a428" opacity="0.8"/>
<rect x="853" y="504" width="1" height="1" fill="#b4a428" opacity="0.3"/>
<rect x="882" y="504" width="8" height="1" fill="#b4a428" opacity="0.8"/>
<rect x="890" y="504" width="1" height="1" fill="#b4a428" opacity="0.3"/>
<rect x="306" y="502" width="36" height="1" fill="#daf8da" opacity="1.0"/>
<rect x="321" y="502" width="6" height="1" fill="#00ee00"/>
<rect x="405" y="501" width="36" height="1" fill="#c8f6c8" opacity="1.0"/>
<rect x="420" y="501" width="6" height="2" fill="#00ee00"/>
<rect x="604" y="502" width="36" height="1" fill="#daf8da" opacity="1.0"/>
<rect x="619" y="502" width="6" height="1" fill="#00ee00"/>
<rect x="653" y="504" width="36" height="1" fill="#b4f2b4" opacity="1.0"/>
<rect x="668" y="504" width="6" height="3" fill="#00ee00"/>
<rect x="802" y="504" width="36" height="1" fill="#daf8da" opacity="1.0"/>
<rect x="817" y="504" width="6" height="1" fill="#00ee00"/>
<rect x="901" y="502" width="36" height="1" fill="#daf8da" opacity="1.0"/>
<rect x="916" y="502" width="6" height="1" fill="#00ee00"/>
<rect x="506" y="504" width="41" height="1" fill="#d2d2ff" opacity="1.0"/>
<rect x="507" y="504" width="8" height="1" fill="#5a5aff" opacity="0.8"/>
<rect x="506" y="504" width="1" height="1" fill="#5a5aff" opacity="0.3"/>
<rect x="538" y="504" width="8" height="1" fill="#5a5aff" opacity="0.8"/>
<rect x="546" y="504" width="1" height="1" fill="#5a5aff" opacity="0.3"/>
<rect x="462" y="504" width="34" height="1" fill="#b4b4ff" opacity="1.0"/>
<rect x="463" y="504" width="4" height="1" fill="#6c6cff" opacity="0.8"/>
<rect x="488" y="504" width="7" height="1" fill="#6c6cff" opacity="0.8"/>
<rect x="457" y="505" width="1" height="1" fill="#1010f0" opacity="0.5"/>
<rect x="458" y="505" width="5" height="1" fill="#1010f0" opacity="1.0"/>
<rect x="479" y="505" width="14" height="1" fill="#c6c6ff" opacity="1.0"/>
<rect x="460" y="506" width="33" height="1" fill="#c0c0ff" opacity="1.0"/>
<rect x="493" y="506" width="5" height="1" fill="#1010f0" opacity="1.0"/>
<rect x="491" y="506" width="2" height="1" fill="#1010f0" opacity="0.5"/>
<rect x="561" y="500" width="34" height="1" fill="#b4b4ff" opacity="1.0"/>
<rect x="562" y="500" width="4" height="1" fill="#6c6cff" opacity="0.8"/>
<rect x="587" y="500" width="7" height="1" fill="#6c6cff" opacity="0.8"/>
<rect x="556" y="501" width="1" height="1" fill="#1010f0" opacity="0.5"/>
<rect x="557" y="501" width="5" height="1" fill="#1010f0" opacity="1.0"/>
<rect x="578" y="501" width="14" height="1" fill="#c6c6ff" opacity="1.0"/>
<rect x="559" y="502" width="33" height="1" fill="#c0c0ff" opacity="1.0"/>
<rect x="592" y="502" width="5" height="1" fill="#1010f0" opacity="1.0"/>
<rect x="590" y="502" width="2" height="1" fill="#1010f0" opacity="0.5"/>
<text transform="matrix(1 0 0 1.07 552.4 542)" text-anchor="middle" fill="#000064" stroke="#000064" font-size="13.1" textLength="214" lengthAdjust="spacingAndGlyphs">Multiz Alignments of 100 Vertebrates</text>
<text transform="matrix(1 0 0 1.07 151.7 556)" text-anchor="end" fill="#e68200" stroke="#e68200" font-size="13.1">Gaps</text>
<text transform="matrix(1 0 0 1.07 151.7 571)" text-anchor="end" fill="#000064" stroke="#000064" font-size="13.1">Human</text>
<text transform="matrix(1 0 0 1.07 179.3 571)" text-anchor="middle" fill="#000064" stroke="#000064" font-size="13.1">T</text>
<text transform="matrix(1 0 0 1.07 228.0 571)" text-anchor="middle" fill="#000064" stroke="#000064" font-size="13.1">A</text>
<text transform="matrix(1 0 0 1.07 277.7 571)" text-anchor="middle" fill="#000064" stroke="#000064" font-size="13.1">C</text>
<text transform="matrix(1 0 0 1.07 327.8 571)" text-anchor="middle" fill="#000064" stroke="#000064" font-size="13.1">T</text>
<text transform="matrix(1 0 0 1.07 377.3 571)" text-anchor="middle" fill="#000064" stroke="#000064" font-size="13.1">T</text>
<text transform="matrix(1 0 0 1.07 426.8 571)" text-anchor="middle" fill="#000064" stroke="#000064" font-size="13.1">T</text>
<text transform="matrix(1 0 0 1.07 475.9 571)" text-anchor="middle" fill="#000064" stroke="#000064" font-size="13.1">G</text>
<text transform="matrix(1 0 0 1.07 525.4 571)" text-anchor="middle" fill="#000064" stroke="#000064" font-size="13.1">G</text>
<text transform="matrix(1 0 0 1.07 574.9 571)" text-anchor="middle" fill="#000064" stroke="#000064" font-size="13.1">G</text>
<text transform="matrix(1 0 0 1.07 624.8 571)" text-anchor="middle" fill="#000064" stroke="#000064" font-size="13.1">T</text>
<text transform="matrix(1 0 0 1.07 674.3 571)" text-anchor="middle" fill="#000064" stroke="#000064" font-size="13.1">T</text>
<text transform="matrix(1 0 0 1.07 723.8 571)" text-anchor="middle" fill="#000064" stroke="#000064" font-size="13.1">T</text>
<text transform="matrix(1 0 0 1.07 772.7 571)" text-anchor="middle" fill="#000064" stroke="#000064" font-size="13.1">C</text>
<text transform="matrix(1 0 0 1.07 822.8 571)" text-anchor="middle" fill="#000064" stroke="#000064" font-size="13.1">T</text>
<text transform="matrix(1 0 0 1.07 872.3 571)" text-anchor="middle" fill="#000064" stroke="#000064" font-size="13.1">T</text>
<text transform="matrix(1 0 0 1.07 921.8 571)" text-anchor="middle" fill="#000064" stroke="#000064" font-size="13.1">T</text>
<text transform="matrix(1 0 0 1.07 151.7 586)" text-anchor="end" fill="#000064" stroke="#000064" font-size="13.1">Rhesus</text>
<text transform="matrix(1 0 0 1.07 179.3 586)" text-anchor="middle" fill="#000064" stroke="#000064" font-size="13.1">T</text>
<text transform="matrix(1 0 0 1.07 228.0 586)" text-anchor="middle" fill="#000064" stroke="#000064" font-size="13.1">A</text>
<text transform="matrix(1 0 0 1.07 277.7 586)" text-anchor="middle" fill="#000064" stroke="#000064" font-size="13.1">C</text>
<text transform="matrix(1 0 0 1.07 327.8 586)" text-anchor="middle" fill="#000064" stroke="#000064" font-size="13.1">T</text>
<text transform="matrix(1 0 0 1.07 377.3 586)" text-anchor="middle" fill="#000064" stroke="#000064" font-size="13.1">T</text>
<text transform="matrix(1 0 0 1.07 426.8 586)" text-anchor="middle" fill="#000064" stroke="#000064" font-size="13.1">T</text>
<text transform="matrix(1 0 0 1.07 475.5 586)" text-anchor="middle" fill="#8686ba" stroke="#8686ba" font-size="13.1">A</text>
<text transform="matrix(1 0 0 1.07 525.4 586)" text-anchor="middle" fill="#000064" stroke="#000064" font-size="13.1">G</text>
<text transform="matrix(1 0 0 1.07 574.9 586)" text-anchor="middle" fill="#000064" stroke="#000064" font-size="13.1">G</text>
<text transform="matrix(1 0 0 1.0 624.0999999999999 585.8)" text-anchor="middle" fill="#7878b0" stroke="#7878b0" font-size="13.1">-</text>
<text transform="matrix(1 0 0 1.0 673.5999999999999 585.8)" text-anchor="middle" fill="#7878b0" stroke="#7878b0" font-size="13.1">-</text>
<text transform="matrix(1 0 0 1.0 723.0999999999999 585.8)" text-anchor="middle" fill="#7878b0" stroke="#7878b0" font-size="13.1">-</text>
<text transform="matrix(1 0 0 1.0 772.5999999999999 585.8)" text-anchor="middle" fill="#7878b0" stroke="#7878b0" font-size="13.1">-</text>
<text transform="matrix(1 0 0 1.07 822.8 586)" text-anchor="middle" fill="#000064" stroke="#000064" font-size="13.1">T</text>
<text transform="matrix(1 0 0 1.07 872.3 586)" text-anchor="middle" fill="#000064" stroke="#000064" font-size="13.1">T</text>
<text transform="matrix(1 0 0 1.07 921.8 586)" text-anchor="middle" fill="#000064" stroke="#000064" font-size="13.1">T</text>
<text transform="matrix(1 0 0 1.07 151.7 601)" text-anchor="end" fill="#006400" stroke="#006400" font-size="13.1">Mouse</text>
<text transform="matrix(1 0 0 0.8 179.0 601.6)" text-anchor="middle" fill="#7474b4" stroke="#7474b4" font-size="13.1">=</text>
<text transform="matrix(1 0 0 0.8 228.5 601.6)" text-anchor="middle" fill="#7474b4" stroke="#7474b4" font-size="13.1">=</text>
<text transform="matrix(1 0 0 0.8 278.0 601.6)" text-anchor="middle" fill="#7474b4" stroke="#7474b4" font-size="13.1">=</text>
<text transform="matrix(1 0 0 0.8 327.5 601.6)" text-anchor="middle" fill="#7474b4" stroke="#7474b4" font-size="13.1">=</text>
<text transform="matrix(1 0 0 0.8 377.0 601.6)" text-anchor="middle" fill="#7474b4" stroke="#7474b4" font-size="13.1">=</text>
<text transform="matrix(1 0 0 0.8 426.5 601.6)" text-anchor="middle" fill="#7474b4" stroke="#7474b4" font-size="13.1">=</text>
<text transform="matrix(1 0 0 0.8 476.0 601.6)" text-anchor="middle" fill="#7474b4" stroke="#7474b4" font-size="13.1">=</text>
<text transform="matrix(1 0 0 0.8 525.5 601.6)" text-anchor="middle" fill="#7474b4" stroke="#7474b4" font-size="13.1">=</text>
<text transform="matrix(1 0 0 0.8 575.0 601.6)" text-anchor="middle" fill="#7474b4" stroke="#7474b4" font-size="13.1">=</text>
<text transform="matrix(1 0 0 0.8 624.5 601.6)" text-anchor="middle" fill="#7474b4" stroke="#7474b4" font-size="13.1">=</text>
<text transform="matrix(1 0 0 0.8 674.0 601.6)" text-anchor="middle" fill="#7474b4" stroke="#7474b4" font-size="13.1">=</text>
<text transform="matrix(1 0 0 0.8 723.5 601.6)" text-anchor="middle" fill="#7474b4" stroke="#7474b4" font-size="13.1">=</text>
<text transform="matrix(1 0 0 0.8 773.0 601.6)" text-anchor="middle" fill="#7474b4" stroke="#7474b4" font-size="13.1">=</text>
<text transform="matrix(1 0 0 0.8 822.5 601.6)" text-anchor="middle" fill="#7474b4" stroke="#7474b4" font-size="13.1">=</text>
<text transform="matrix(1 0 0 0.8 872.0 601.6)" text-anchor="middle" fill="#7474b4" stroke="#7474b4" font-size="13.1">=</text>
<text transform="matrix(1 0 0 0.8 921.5 601.6)" text-anchor="middle" fill="#7474b4" stroke="#7474b4" font-size="13.1">=</text>
<text transform="matrix(1 0 0 1.07 151.7 616)" text-anchor="end" fill="#000064" stroke="#000064" font-size="13.1">Dog</text>
<text transform="matrix(1 0 0 1.07 179.3 616)" text-anchor="middle" fill="#000064" stroke="#000064" font-size="13.1">T</text>
<text transform="matrix(1 0 0 1.0 228.10000000000002 615.8)" text-anchor="middle" fill="#7878b0" stroke="#7878b0" font-size="13.1">-</text>
<text transform="matrix(1 0 0 1.07 277.5 616)" text-anchor="middle" fill="#8686ba" stroke="#8686ba" font-size="13.1">A</text>
<text transform="matrix(1 0 0 1.07 327.8 616)" text-anchor="middle" fill="#000064" stroke="#000064" font-size="13.1">T</text>
<text transform="matrix(1 0 0 1.07 377.3 616)" text-anchor="middle" fill="#000064" stroke="#000064" font-size="13.1">T</text>
<text transform="matrix(1 0 0 1.07 426.8 616)" text-anchor="middle" fill="#000064" stroke="#000064" font-size="13.1">T</text>
<text transform="matrix(1 0 0 1.07 476.3 616)" text-anchor="middle" fill="#8686ba" stroke="#8686ba" font-size="13.1">T</text>
<text transform="matrix(1 0 0 1.07 525.8 616)" text-anchor="middle" fill="#8686ba" stroke="#8686ba" font-size="13.1">T</text>
<text transform="matrix(1 0 0 1.07 574.9 616)" text-anchor="middle" fill="#000064" stroke="#000064" font-size="13.1">G</text>
<text transform="matrix(1 0 0 1.07 624.8 616)" text-anchor="middle" fill="#000064" stroke="#000064" font-size="13.1">T</text>
<text transform="matrix(1 0 0 1.07 674.3 616)" text-anchor="middle" fill="#000064" stroke="#000064" font-size="13.1">T</text>
<text transform="matrix(1 0 0 1.07 723.8 616)" text-anchor="middle" fill="#000064" stroke="#000064" font-size="13.1">T</text>
<text transform="matrix(1 0 0 1.07 772.7 616)" text-anchor="middle" fill="#000064" stroke="#000064" font-size="13.1">C</text>
<text transform="matrix(1 0 0 1.07 822.8 616)" text-anchor="middle" fill="#000064" stroke="#000064" font-size="13.1">T</text>
<text transform="matrix(1 0 0 1.07 872.3 616)" text-anchor="middle" fill="#000064" stroke="#000064" font-size="13.1">T</text>
<text transform="matrix(1 0 0 1.07 921.8 616)" text-anchor="middle" fill="#000064" stroke="#000064" font-size="13.1">T</text>
<text transform="matrix(1 0 0 1.07 151.7 631)" text-anchor="end" fill="#006400" stroke="#006400" font-size="13.1">Elephant</text>
<text transform="matrix(1 0 0 0.8 179.0 631.6)" text-anchor="middle" fill="#7474b4" stroke="#7474b4" font-size="13.1">=</text>
<text transform="matrix(1 0 0 0.8 228.5 631.6)" text-anchor="middle" fill="#7474b4" stroke="#7474b4" font-size="13.1">=</text>
<text transform="matrix(1 0 0 0.8 278.0 631.6)" text-anchor="middle" fill="#7474b4" stroke="#7474b4" font-size="13.1">=</text>
<text transform="matrix(1 0 0 0.8 327.5 631.6)" text-anchor="middle" fill="#7474b4" stroke="#7474b4" font-size="13.1">=</text>
<text transform="matrix(1 0 0 0.8 377.0 631.6)" text-anchor="middle" fill="#7474b4" stroke="#7474b4" font-size="13.1">=</text>
<text transform="matrix(1 0 0 0.8 426.5 631.6)" text-anchor="middle" fill="#7474b4" stroke="#7474b4" font-size="13.1">=</text>
<text transform="matrix(1 0 0 0.8 476.0 631.6)" text-anchor="middle" fill="#7474b4" stroke="#7474b4" font-size="13.1">=</text>
<text transform="matrix(1 0 0 0.8 525.5 631.6)" text-anchor="middle" fill="#7474b4" stroke="#7474b4" font-size="13.1">=</text>
<text transform="matrix(1 0 0 0.8 575.0 631.6)" text-anchor="middle" fill="#7474b4" stroke="#7474b4" font-size="13.1">=</text>
<text transform="matrix(1 0 0 0.8 624.5 631.6)" text-anchor="middle" fill="#7474b4" stroke="#7474b4" font-size="13.1">=</text>
<text transform="matrix(1 0 0 0.8 674.0 631.6)" text-anchor="middle" fill="#7474b4" stroke="#7474b4" font-size="13.1">=</text>
<text transform="matrix(1 0 0 0.8 723.5 631.6)" text-anchor="middle" fill="#7474b4" stroke="#7474b4" font-size="13.1">=</text>
<text transform="matrix(1 0 0 0.8 773.0 631.6)" text-anchor="middle" fill="#7474b4" stroke="#7474b4" font-size="13.1">=</text>
<text transform="matrix(1 0 0 0.8 822.5 631.6)" text-anchor="middle" fill="#7474b4" stroke="#7474b4" font-size="13.1">=</text>
<text transform="matrix(1 0 0 0.8 872.0 631.6)" text-anchor="middle" fill="#7474b4" stroke="#7474b4" font-size="13.1">=</text>
<text transform="matrix(1 0 0 0.8 921.5 631.6)" text-anchor="middle" fill="#7474b4" stroke="#7474b4" font-size="13.1">=</text>
<text transform="matrix(1 0 0 1.07 151.7 646)" text-anchor="end" fill="#006400" stroke="#006400" font-size="13.1">Chicken</text>
<text transform="matrix(1 0 0 1.07 151.7 661)" text-anchor="end" fill="#000064" stroke="#000064" font-size="13.1">X_tropicalis</text>
<text transform="matrix(1 0 0 0.8 179.0 661.6)" text-anchor="middle" fill="#7474b4" stroke="#7474b4" font-size="13.1">=</text>
<text transform="matrix(1 0 0 0.8 228.5 661.6)" text-anchor="middle" fill="#7474b4" stroke="#7474b4" font-size="13.1">=</text>
<text transform="matrix(1 0 0 0.8 278.0 661.6)" text-anchor="middle" fill="#7474b4" stroke="#7474b4" font-size="13.1">=</text>
<text transform="matrix(1 0 0 0.8 327.5 661.6)" text-anchor="middle" fill="#7474b4" stroke="#7474b4" font-size="13.1">=</text>
<text transform="matrix(1 0 0 0.8 377.0 661.6)" text-anchor="middle" fill="#7474b4" stroke="#7474b4" font-size="13.1">=</text>
<text transform="matrix(1 0 0 0.8 426.5 661.6)" text-anchor="middle" fill="#7474b4" stroke="#7474b4" font-size="13.1">=</text>
<text transform="matrix(1 0 0 0.8 476.0 661.6)" text-anchor="middle" fill="#7474b4" stroke="#7474b4" font-size="13.1">=</text>
<text transform="matrix(1 0 0 0.8 525.5 661.6)" text-anchor="middle" fill="#7474b4" stroke="#7474b4" font-size="13.1">=</text>
<text transform="matrix(1 0 0 0.8 575.0 661.6)" text-anchor="middle" fill="#7474b4" stroke="#7474b4" font-size="13.1">=</text>
<text transform="matrix(1 0 0 0.8 624.5 661.6)" text-anchor="middle" fill="#7474b4" stroke="#7474b4" font-size="13.1">=</text>
<text transform="matrix(1 0 0 0.8 674.0 661.6)" text-anchor="middle" fill="#7474b4" stroke="#7474b4" font-size="13.1">=</text>
<text transform="matrix(1 0 0 0.8 723.5 661.6)" text-anchor="middle" fill="#7474b4" stroke="#7474b4" font-size="13.1">=</text>
<text transform="matrix(1 0 0 0.8 773.0 661.6)" text-anchor="middle" fill="#7474b4" stroke="#7474b4" font-size="13.1">=</text>
<text transform="matrix(1 0 0 0.8 822.5 661.6)" text-anchor="middle" fill="#7474b4" stroke="#7474b4" font-size="13.1">=</text>
<text transform="matrix(1 0 0 0.8 872.0 661.6)" text-anchor="middle" fill="#7474b4" stroke="#7474b4" font-size="13.1">=</text>
<text transform="matrix(1 0 0 0.8 921.5 661.6)" text-anchor="middle" fill="#7474b4" stroke="#7474b4" font-size="13.1">=</text>
<text transform="matrix(1 0 0 1.07 151.7 676)" text-anchor="end" fill="#006400" stroke="#006400" font-size="13.1">Zebrafish</text>
<text transform="matrix(1 0 0 1.07 552 692)" text-anchor="middle" fill="#000" stroke="#000" font-size="13.1">Repeating Elements by RepeatMasker</text>
<text transform="matrix(1 0 0 1.07 151.7 706)" text-anchor="end" fill="#000" stroke="#000" font-size="13.1" textLength="82.5" lengthAdjust="spacingAndGlyphs">RepeatMasker</text>
</svg>
</body></html>
